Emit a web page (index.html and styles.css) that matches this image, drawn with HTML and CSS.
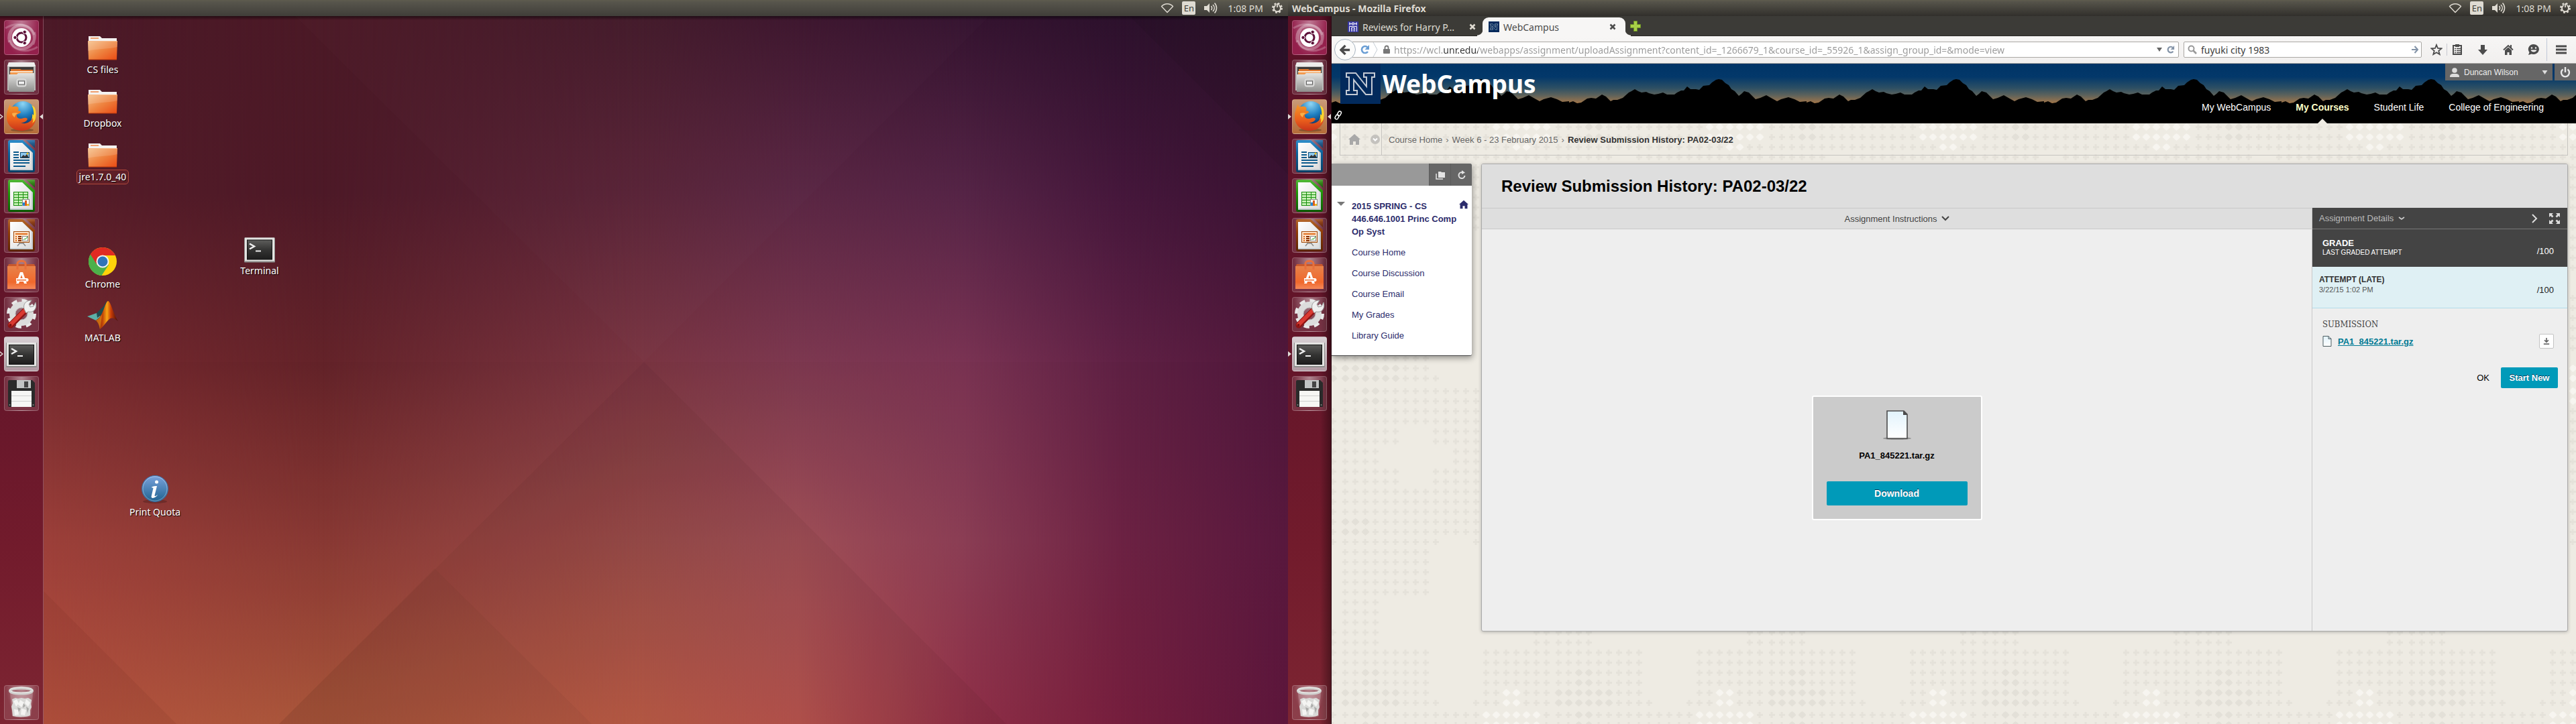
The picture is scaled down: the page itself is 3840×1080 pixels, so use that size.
FILE: index.html
```html
<!DOCTYPE html>
<html lang="en">
<head>
<meta charset="utf-8">
<title>WebCampus</title>
<link rel="stylesheet" href="styles.css">
</head>
<body>
<svg class="defs" aria-hidden="true">
  <defs>
    <linearGradient id="gSteel" x1="0" y1="0" x2="0" y2="1"><stop offset="0" stop-color="#e4e4e2"/><stop offset="1" stop-color="#8e8e8c"/></linearGradient>
    <linearGradient id="gFolder" x1="0" y1="0" x2="1" y2="1"><stop offset="0" stop-color="#f6c088"/><stop offset=".5" stop-color="#ee8440"/><stop offset="1" stop-color="#ea4a14"/></linearGradient>
    <linearGradient id="gScreen" x1="0" y1="0" x2="0" y2="1"><stop offset="0" stop-color="#5c5c5a"/><stop offset=".5" stop-color="#343433"/><stop offset="1" stop-color="#1e1e1e"/></linearGradient>
    <linearGradient id="gPage" x1="0" y1="0" x2="1" y2="1"><stop offset="0" stop-color="#ffffff"/><stop offset="1" stop-color="#dcdcdc"/></linearGradient>
    <linearGradient id="gBlue" x1="0" y1="0" x2="0" y2="1"><stop offset="0" stop-color="#2e8ecb"/><stop offset=".4" stop-color="#0c639c"/><stop offset="1" stop-color="#063f66"/></linearGradient>
    <linearGradient id="gGreen" x1="0" y1="0" x2="0" y2="1"><stop offset="0" stop-color="#52b838"/><stop offset=".4" stop-color="#1f9808"/><stop offset="1" stop-color="#0b5c02"/></linearGradient>
    <linearGradient id="gBrown" x1="0" y1="0" x2="0" y2="1"><stop offset="0" stop-color="#b5682c"/><stop offset=".4" stop-color="#8f3c08"/><stop offset="1" stop-color="#5c2402"/></linearGradient>
    <linearGradient id="gBag" x1="0" y1="0" x2="0" y2="1"><stop offset="0" stop-color="#e8824a"/><stop offset=".7" stop-color="#f0682c"/><stop offset="1" stop-color="#f5895a"/></linearGradient>
    <linearGradient id="gInfo" x1="0" y1="0" x2="0" y2="1"><stop offset="0" stop-color="#7aa2dc"/><stop offset="1" stop-color="#1f6390"/></linearGradient>
    <radialGradient id="gGlobe" cx=".5" cy=".1" r=".9"><stop offset="0" stop-color="#8fd6f4"/><stop offset=".5" stop-color="#1f7fc0"/><stop offset="1" stop-color="#0a2558"/></radialGradient>
    <linearGradient id="gFox" x1="0" y1="0" x2="0" y2="1"><stop offset="0" stop-color="#f59a28"/><stop offset=".6" stop-color="#ea5f1c"/><stop offset="1" stop-color="#c8341a"/></linearGradient>
    <linearGradient id="gFlame" x1="0" y1="0" x2="1" y2="0"><stop offset="0" stop-color="#7a2408"/><stop offset=".3" stop-color="#c04408"/><stop offset=".5" stop-color="#f8a414"/><stop offset=".68" stop-color="#c83c08"/><stop offset="1" stop-color="#3a0a04"/></linearGradient>
    <linearGradient id="gSheet" x1="0" y1="0" x2="0" y2="1"><stop offset="0" stop-color="#e2f3fc"/><stop offset="1" stop-color="#ffffff"/></linearGradient>
    <linearGradient id="gSky" x1="0" y1="0" x2="0" y2="1"><stop offset="0" stop-color="#003466"/><stop offset=".33" stop-color="#03386a"/><stop offset=".6" stop-color="#2c4f64"/><stop offset=".78" stop-color="#5c625c"/><stop offset="1" stop-color="#a87848"/></linearGradient>
  </defs>

  <symbol id="dash" viewBox="0 0 52 52">
    <path d="M8 33C4 15 18 4 32 9c12 4 16 17 11 27M45 18c4 14-8 28-24 24C9 39 6 24 13 13" fill="none" stroke="#fff" stroke-opacity=".3" stroke-width="4"/>
    <path d="M2 12C18 2 40 5 45 22M50 40C34 50 12 46 8 30" fill="none" stroke="#fff" stroke-opacity=".22" stroke-width="3"/>
    <circle cx="26" cy="26" r="14" fill="#fff"/>
    <circle cx="26" cy="26" r="7" fill="none" stroke="#5c1038" stroke-width="3"/>
    <g fill="#5c1038" stroke="#fff" stroke-width="1"><circle cx="16.500" cy="26" r="2.700"/><circle cx="30.700" cy="17.800" r="2.700"/><circle cx="30.700" cy="34.200" r="2.700"/></g>
  </symbol>
  <symbol id="files" viewBox="0 0 52 52">
    <path d="M7 4h38l2 5v37H5V9z" fill="#b9b9b7"/><path d="M7 4h38l2 6H5z" fill="#ededeb"/>
    <rect x="8" y="11" width="36" height="12" fill="#3c3a38"/>
    <path d="M10 14h14l2 1h17v10H10z" fill="#e0762c"/><path d="M9 17h34v2H9z" fill="#fbe3c8"/><path d="M9 19h34v6H9z" fill="#f29a4e"/>
    <path d="M7 22h12l2-2h24v28H7z" fill="url(#gSteel)"/>
    <rect x="19" y="29" width="14" height="11" rx="3" fill="#c9c9c7" stroke="#e6e6e6"/><rect x="21.500" y="32" width="9" height="5" fill="#f2f2f2" stroke="#5c5c5c"/>
  </symbol>
  <symbol id="firefox" viewBox="0 0 52 52">
    <ellipse cx="27" cy="46" rx="17" ry="2.500" fill="#000" opacity=".25"/>
    <circle cx="28" cy="22" r="19" fill="url(#gGlobe)"/>
    <path d="M46 13c2 5 3 16-2 23-3 4-7 6-12 6 8-5 11-14 10-20l2 2c1-6-1-12-3-15 2 1 4 2 5 4z" fill="#fbd52c"/>
    <path d="M5 18c1-5 3-8 4-11 0 3 1 4 2 5 4-2 8-1 10 0 1 3 1 4-1 5 4 0 5 1 5 3l-6 3c-1 3 2 6 5 6 4 0 7-3 11 0-1 4-5 6-10 6 6 3 14 0 18-7 1 4 0 6-1 8 4-3 6-7 6-11 0 13-9 22-22 22C13 47 4 38 4 27c0-4 0-7 1-9z" fill="url(#gFox)"/>
    <path d="M12 21c3-1 6-1 9 0-3 1-5 3-5 6-2-1-4-3-4-6z" fill="#f9b04a"/>
  </symbol>
  <symbol id="doc" viewBox="0 0 52 52">
    <path d="M9 2h19l18 16v29a3 3 0 0 1-3 3H9a3 3 0 0 1-3-3V5a3 3 0 0 1 3-3z"/>
    <path d="M33 2h13v12z" opacity=".8"/>
    <path d="M11 6h16l16 15v26H9V6z" fill="#c4ccd2"/><path d="M9 6h18l14 14v25H9z" fill="url(#gPage)"/>
  </symbol>
  <symbol id="writer" viewBox="0 0 52 52">
    <use href="#doc" fill="url(#gBlue)"/>
    <path d="M14 20h8M14 24h8M14 28h8M14 32h24M14 36h24M14 41h18" stroke="#0b5a8c" stroke-width="2"/>
    <rect x="24.500" y="20.500" width="13" height="8" fill="#8fcaf0" stroke="#0b4a74"/><path d="M25 28l4-4 2 2 3-3 3 5z" fill="#333"/><circle cx="35" cy="22" r="1.500" fill="#f2c020"/>
  </symbol>
  <symbol id="calc" viewBox="0 0 52 52">
    <use href="#doc" fill="url(#gGreen)"/>
    <rect x="14.500" y="20.500" width="21" height="20" fill="#c6f0b4" stroke="#1a9010"/><path d="M14 24.500h22M14 28.500h22M14 32.500h22M14 36.500h22M21.500 20v20M28.500 20v20" stroke="#1a9010" fill="none"/>
    <rect x="27.500" y="31.500" width="10" height="9" fill="#fff" stroke="#8a8a8a"/><path d="M28 36h3v5h-3z" fill="#2288d8"/><path d="M31 33h3v8h-3z" fill="#d86020"/><path d="M34 38h3v3h-3z" fill="#f0c020"/>
  </symbol>
  <symbol id="impress" viewBox="0 0 52 52">
    <use href="#doc" fill="url(#gBrown)"/>
    <rect x="14.500" y="20.500" width="23" height="16" fill="#fde2c8" stroke="#a04808"/><path d="M17 24h18" stroke="#e07020" stroke-width="2"/>
    <path d="M17 28h2M17 31h2M17 34h2" stroke="#e07020" stroke-width="2"/><path d="M21 28h5M21 31h5M21 34h5" stroke="#8a3000" stroke-width="2"/>
    <rect x="27.500" y="27.500" width="8" height="7" fill="#fff" stroke="#8a8a8a"/><path d="M29 33l2-2 1 1 3-4" stroke="#20a020" fill="none"/><path d="M24 37l-4 5M28 37l4 5M22 38h8" stroke="#8a8a8a" stroke-width="1.500"/>
  </symbol>
  <symbol id="software" viewBox="0 0 52 52">
    <path d="M7 10h38l2 4H5z" fill="#c8582c"/><path d="M5 13h42v34H5z" fill="url(#gBag)"/>
    <path d="M20 18V9c0-5 12-5 12 0v9" fill="none" stroke="#e8703c" stroke-width="3"/>
    <path d="M24 22h4l6 17h-4l-1-3h-6l-1 3h-4zm2 4l-2 6h4z" fill="#fff" fill-rule="evenodd"/><path d="M18 31h16a2 2 0 0 1 0 5H18z" fill="#fff"/><path d="M19 33h14v1.500H19z" fill="#ea6a30"/>
  </symbol>
  <symbol id="settings" viewBox="0 0 52 52">
    <circle cx="26" cy="25" r="19.500" fill="none" stroke="#e9e9e9" stroke-width="5" stroke-dasharray="8.200 7.100"/>
    <circle cx="26" cy="25" r="13.500" fill="none" stroke="#dcdcdc" stroke-width="9"/>
    <circle cx="26" cy="25" r="9" fill="none" stroke="#b2b2b2"/>
    <path d="M10 42L32 20" stroke="#8e1414" stroke-width="9" stroke-linecap="round"/><path d="M10 41L32 19" stroke="#d93a32" stroke-width="6" stroke-linecap="round"/><circle cx="9.500" cy="42" r="2" fill="#7c1010"/>
    <path d="M30 18c-2-8 3-13 11-13l-4 6 2 4 5-1 3-6c3 9-3 16-11 14l-3 2z" fill="#f0f0f0" stroke="#9c9c9c"/>
  </symbol>
  <symbol id="termapp" viewBox="0 0 52 52">
    <rect x="3" y="9" width="46" height="37" rx="1" fill="#8c8c8a"/><rect x="4" y="9" width="44" height="35" fill="#e4e4e2"/><rect x="7" y="12" width="38" height="30" fill="#111"/><rect x="8" y="13" width="36" height="28" fill="url(#gScreen)"/>
    <path d="M11 18l7 4-7 4" fill="none" stroke="#eee" stroke-width="2.500"/><path d="M20 29h8" stroke="#eee" stroke-width="2"/>
  </symbol>
  <symbol id="floppy" viewBox="0 0 52 52">
    <path d="M6 8a2 2 0 0 1 2-2h34l4 4v36H8a2 2 0 0 1-2-2z" fill="#2a2a2a"/><path d="M19 6h21v12H19z" fill="#c2c4c4"/><path d="M30 8h6v9h-6z" fill="#444"/><path d="M11 22h30v24H11z" fill="#f6f6f4"/><path d="M11 29.500h30M11 37.500h30" stroke="#cfcfcf"/><circle cx="8.500" cy="43" r="1" fill="#888"/><circle cx="43.500" cy="43" r="1" fill="#888"/>
  </symbol>
  <symbol id="trash" viewBox="0 0 52 52">
    <path d="M9 12l3 34c4 3 24 3 28 0l3-34z" fill="#fff" opacity=".22"/>
    <path d="M12 21l5-2 4 1 5-1 5 1 5-1 5 3-1 6 1 5-2 4v8c-4 3-20 3-26 1l-1-9-1-5 2-5z" fill="#d9d9d7"/>
    <path d="M14 24l5-3 3 6-4 5zM24 22l6 4-4 7-5-4zM33 21l6 5-3 6-5-5zM15 36l6 1 1 7-6 1zM26 35l7 2-2 8-6-1z" fill="#f4f4f2"/><path d="M20 33l5 2-3 5zM33 32l4 3-2 7zM29 27l3 4-4 3z" fill="#a9a9a7"/>
    <ellipse cx="25.500" cy="8.500" rx="16.500" ry="4" fill="none" stroke="#cfcfcd" stroke-width="4"/><ellipse cx="25.500" cy="7.500" rx="17" ry="4" fill="none" stroke="#f2f2f0"/>
  </symbol>

  <symbol id="folder" viewBox="0 0 48 40">
    <path d="M3 2h17l3 3h22v8H3z" fill="#f4f2f0"/><path d="M6 4h12v2H6z" fill="#f0a070"/>
    <path d="M2 9h44l-1 28H3z" fill="url(#gFolder)"/><path d="M2 9h44v9C30 22 16 20 2 24z" fill="#fff" opacity=".14"/><path d="M3 37h42" stroke="#b8380c"/><path d="M2 9.500h44" stroke="#f8b888"/>
  </symbol>
  <symbol id="chrome" viewBox="0 0 44 44">
    <circle cx="22" cy="22" r="21" fill="#fdd20a"/><path d="M22 22L3.800 11.500A21 21 0 0 0 20.500 43L31 27z" fill="#4cb04a"/><path d="M22 13h19A21 21 0 0 0 3.800 11.500L13 26z" fill="#e02a22"/>
    <circle cx="22" cy="22" r="9.500" fill="#f2f2f2"/><circle cx="22" cy="22" r="7.500" fill="#2f74b8"/>
  </symbol>
  <symbol id="matlab" viewBox="0 0 48 44">
    <path d="M1 24l14-5 6 5-7 6z" fill="#5cb0a8"/><path d="M15 19l7-7c4-2 6-9 9-11l-8 20-7 5z" fill="#1e4c50"/>
    <path d="M32 1c4 0 8 20 15 30-5-4-9-6-13-3-5 4-8 11-14 15-1-5-2-9-6-13 11-5 13-27 18-29z" fill="url(#gFlame)"/>
    <path d="M14 30c4-2 7-6 9-9l-1 9-2 13c-1-5-2-9-6-13z" fill="#e89018" opacity=".6"/>
  </symbol>
  <symbol id="info" viewBox="0 0 44 44">
    <ellipse cx="22" cy="40" rx="18" ry="3" fill="#000" opacity=".2"/><circle cx="22" cy="21" r="19.500" fill="url(#gInfo)" stroke="#3a6ea4"/><circle cx="22" cy="21" r="18" fill="none" stroke="#fff" stroke-opacity=".35"/>
    <circle cx="24.500" cy="11" r="2.500" fill="#fff"/><path d="M16.500 19c3-2 6-2 8.500-2l-3.500 14c0 2 2 1 4.500-1-2 4-9 7-9.500 3l3-13z" fill="#fff"/>
  </symbol>

  <symbol id="wifi" viewBox="0 0 20 16"><path d="M10 14.500L1.500 5.500C6 .5 14 .5 18.500 5.500z" fill="none" stroke="#dfdbd2" stroke-width="1.400" stroke-linejoin="round"/></symbol>
  <symbol id="volume" viewBox="0 0 20 18"><path d="M0 6h4l4-4v14l-4-4H0z" fill="#dfdbd2"/><path d="M10.500 6c1.500 2 1.500 4 0 6M13 4c3 3 3 7 0 10M15.500 1.500c4 4 4 11 0 15" fill="none" stroke="#dfdbd2" stroke-width="1.600"/></symbol>
  <symbol id="session" viewBox="0 0 16 16"><circle cx="8" cy="8" r="6.500" fill="none" stroke="#dfdbd2" stroke-width="3" stroke-dasharray="2.600 2.500"/><path d="M5.500 4a5 5 0 1 0 5 0" fill="none" stroke="#dfdbd2" stroke-width="2"/><path d="M8 1v6" stroke="#dfdbd2" stroke-width="1.800"/></symbol>
  <symbol id="close" viewBox="0 0 10 10"><path d="M1.500 1.500l7 7M8.500 1.500l-7 7" stroke="currentColor" stroke-width="2.600"/></symbol>
  <symbol id="blockN" viewBox="0 0 60 60"><rect width="60" height="60" fill="#022a5c"/><path d="M9 14h14l16 20V20h-4v-6h16v6h-4v26h-9L20 24v16h5v6H9v-6h4V20H9z" fill="#022a5c" stroke="#c4cad4" stroke-width="2"/></symbol>
  <symbol id="house" viewBox="0 0 18 16"><path d="M9 0l9 8h-2v8h-5v-5H7v5H2V8H0z" fill="currentColor"/></symbol>
  <symbol id="reload" viewBox="0 0 14 16"><path d="M10.500 4.500A5 5 0 1 0 11 11" fill="none" stroke="currentColor" stroke-width="2.600"/><path d="M13 1v7H6.500z" fill="currentColor"/></symbol>
</svg>

<div class="screens">
  <section class="screen" aria-label="Left display">
    <header class="panel">
      <div class="indicators">
        <svg class="i-wifi"><use href="#wifi"/></svg><span class="lang">En</span><svg class="i-vol"><use href="#volume"/></svg><time>1:08 PM</time><svg class="i-ses"><use href="#session"/></svg>
      </div>
    </header>
    <div class="work wallpaper">
      <div class="mesh m1"></div><div class="mesh m2"></div><div class="mesh m3"></div><div class="mesh m4"></div><div class="mesh m5"></div><div class="mesh m6"></div><div class="mesh m7"></div>
      <svg class="folds" viewBox="0 24 1920 1056" preserveAspectRatio="none" aria-hidden="true">
        <path d="M440 24L960 540 1475 24z" fill="#fff" opacity=".012"/><path d="M960 540L416 1080H1500z" fill="#301010" opacity=".06"/><path d="M648 848L416 1080h466z" fill="#40200c" opacity=".05"/><path d="M0 817V1080H263z" fill="#401010" opacity=".07"/><path d="M1684 24H1920V260z" fill="#000" opacity=".05"/><path d="M0 540h1920v540H0z" fill="#000" opacity=".015"/>
      </svg>
      <nav class="launcher" aria-label="Launcher">
        <button class="tile t-dash" aria-label="Search"><svg><use href="#dash"/></svg></button>
        <button class="tile" aria-label="Files"><svg><use href="#files"/></svg></button>
        <button class="tile t-fox open" aria-label="Firefox"><svg><use href="#firefox"/></svg><i class="focus"></i></button>
        <button class="tile" aria-label="Writer"><svg><use href="#writer"/></svg></button>
        <button class="tile" aria-label="Calc"><svg><use href="#calc"/></svg></button>
        <button class="tile" aria-label="Impress"><svg><use href="#impress"/></svg></button>
        <button class="tile" aria-label="Software Center"><svg><use href="#software"/></svg></button>
        <button class="tile" aria-label="System Settings"><svg><use href="#settings"/></svg></button>
        <button class="tile t-term open" aria-label="Terminal"><svg><use href="#termapp"/></svg></button>
        <button class="tile" aria-label="Floppy Disk"><svg><use href="#floppy"/></svg></button>
        <button class="tile last" aria-label="Trash"><svg><use href="#trash"/></svg></button>
      </nav>
      <main class="desktop">
        <a href="#" class="shortcut d-cs"><svg class="s-folder"><use href="#folder"/></svg><span>CS files</span></a>
        <a href="#" class="shortcut d-drop"><svg class="s-folder"><use href="#folder"/></svg><span>Dropbox</span></a>
        <a href="#" class="shortcut d-jre picked"><svg class="s-folder"><use href="#folder"/></svg><span>jre1.7.0_40</span></a>
        <a href="#" class="shortcut d-chrome"><svg class="s-round"><use href="#chrome"/></svg><span>Chrome</span></a>
        <a href="#" class="shortcut d-matlab"><svg class="s-wide"><use href="#matlab"/></svg><span>MATLAB</span></a>
        <a href="#" class="shortcut d-term"><svg class="s-term" viewBox="3 9 46 37"><use href="#termapp" width="52" height="52"/></svg><span>Terminal</span></a>
        <a href="#" class="shortcut d-info"><svg class="s-round"><use href="#info"/></svg><span>Print Quota</span></a>
      </main>
    </div>
  </section>

  <section class="screen" aria-label="Right display">
    <header class="panel dark">
      <strong>WebCampus - Mozilla Firefox</strong>
      <div class="indicators">
        <svg class="i-wifi"><use href="#wifi"/></svg><span class="lang">En</span><svg class="i-vol"><use href="#volume"/></svg><time>1:08 PM</time><svg class="i-ses"><use href="#session"/></svg>
      </div>
    </header>
    <div class="work">
      <nav class="launcher shaded" aria-label="Launcher">
        <button class="tile t-dash" aria-label="Search"><svg><use href="#dash"/></svg></button>
        <button class="tile" aria-label="Files"><svg><use href="#files"/></svg></button>
        <button class="tile t-fox open" aria-label="Firefox"><svg><use href="#firefox"/></svg><i class="focus"></i></button>
        <button class="tile" aria-label="Writer"><svg><use href="#writer"/></svg></button>
        <button class="tile" aria-label="Calc"><svg><use href="#calc"/></svg></button>
        <button class="tile" aria-label="Impress"><svg><use href="#impress"/></svg></button>
        <button class="tile" aria-label="Software Center"><svg><use href="#software"/></svg></button>
        <button class="tile" aria-label="System Settings"><svg><use href="#settings"/></svg></button>
        <button class="tile t-term open" aria-label="Terminal"><svg><use href="#termapp"/></svg></button>
        <button class="tile" aria-label="Floppy Disk"><svg><use href="#floppy"/></svg></button>
        <button class="tile last" aria-label="Trash"><svg><use href="#trash"/></svg></button>
      </nav>

      <div class="browser">
        <div class="tabs">
          <div class="tab">
            <svg class="fav" viewBox="0 0 16 16"><path d="M0 0h16v16H0z" fill="#3434a0"/><path d="M3 1v5M7 1v5M9 1v5M13 1v5M2 3.500h5M9 3.500h5M2.500 15V7.500h11V15M5.500 15V9.500h5V15M8 11v4" fill="none" stroke="#fff"/></svg>
            <span>Reviews for Harry P…</span><button class="x" aria-label="Close tab"><svg><use href="#close"/></svg></button>
          </div>
          <div class="tab active">
            <svg class="fav"><use href="#blockN"/></svg>
            <span>WebCampus</span><button class="x" aria-label="Close tab"><svg><use href="#close"/></svg></button>
          </div>
          <button class="newtab" aria-label="New tab"><svg viewBox="0 0 16 16"><path d="M5.500.5h5v5h5v5h-5v5h-5v-5h-5v-5h5z" fill="#a8d048" stroke="#6e9424"/></svg></button>
        </div>
        <div class="toolbar">
          <button class="back" aria-label="Back"><svg viewBox="0 0 18 18"><path d="M9 2L2 9l7 7M2.500 9H16" fill="none" stroke="#4a4a4a" stroke-width="3.600"/></svg></button>
          <div class="field url">
            <svg class="r-blue" viewBox="0 0 14 16"><use href="#reload"/></svg>
            <svg class="chev" viewBox="0 0 8 22"><path d="M1 0l6 11-6 11" fill="none" stroke="#c4ccd4"/></svg>
            <svg class="lock" viewBox="0 0 10 14"><path d="M2.500 7V4a2.500 2.500 0 0 1 5 0v3" fill="none" stroke="#777" stroke-width="1.800"/><rect y="6" width="10" height="7" rx="1" fill="#777"/></svg>
            <input type="text" aria-label="Address" value="https://wcl.unr.edu/webapps/assignment/uploadAssignment?content_id=_1266679_1&amp;course_id=_55926_1&amp;assign_group_id=&amp;mode=view">
            <svg class="caret" viewBox="0 0 8 6"><path d="M0 0h8L4 6z" fill="#666"/></svg>
            <svg class="r-grey" viewBox="0 0 14 16"><use href="#reload"/></svg>
          </div>
          <div class="field search">
            <svg class="mag" viewBox="0 0 14 14"><circle cx="5.500" cy="5.500" r="4" fill="none" stroke="#999" stroke-width="2"/><path d="M8.500 8.500L13 13" stroke="#999" stroke-width="2.600"/></svg>
            <input type="text" aria-label="Search" value="fuyuki city 1983">
            <svg class="go" viewBox="0 0 10 12"><path d="M0 6h9M4.500 1L9 6l-4.500 5" fill="none" stroke="#8494a8" stroke-width="2"/></svg>
          </div>
          <div class="tools">
            <button class="star" aria-label="Bookmark"><svg viewBox="0 0 18 18"><path d="M9 2l2 5 5.500.4-4.200 3.500L13.700 16 9 13.200 4.300 16l1.400-5.100L1.500 7.400 7 7z" fill="none" stroke="#4c4c4c" stroke-width="1.800"/></svg></button>
            <button aria-label="Bookmarks list"><svg viewBox="0 0 18 18"><path d="M3 3h12v13H3z" fill="none" stroke="#4c4c4c" stroke-width="2"/><path d="M6 1h6v4H6z" fill="#4c4c4c"/><path d="M5 7.500h2M8 7.500h6M5 10.500h2M8 10.500h6M5 13.500h2M8 13.500h6" stroke="#4c4c4c" stroke-width="1.400"/></svg></button>
            <button aria-label="Downloads"><svg viewBox="0 0 18 18"><path d="M6 2h6v7h4l-7 8-7-8h4z" fill="#4c4c4c"/></svg></button>
            <button aria-label="Home"><svg viewBox="0 0 18 18"><path d="M2 9.500L9 3l7 6.500" fill="none" stroke="#4c4c4c" stroke-width="2"/><path d="M4 10l5-4.500L14 10v7h-3.500v-4h-3v4H4zM12 2h2v5h-2z" fill="#4c4c4c"/></svg></button>
            <button aria-label="Chat"><svg viewBox="0 0 18 18"><path d="M9 1a8 7.500 0 1 1-3 14.500L1 17l1.500-4A8 7.500 0 0 1 9 1z" fill="#4c4c4c"/><circle cx="6" cy="6.500" r="1.200" fill="#f4f3f2"/><circle cx="12" cy="6.500" r="1.200" fill="#f4f3f2"/><path d="M4.500 9.500h9c-1 4-8 4-9 0z" fill="#f4f3f2"/></svg></button>
            <button class="menu" aria-label="Menu"><svg viewBox="0 0 18 18"><path d="M1 4h16M1 9h16M1 14h16" stroke="#4c4c4c" stroke-width="2.800"/></svg></button>
          </div>
        </div>

        <div class="page">
          <header class="banner">
            <svg class="hills" aria-hidden="true">
              <defs><pattern id="ridge" width="354" height="89" patternUnits="userSpaceOnUse"><path fill="url(#gSky)" d="M0 0h354v60H0z"/><path d="M0 58l6-2 6 3 6-1 9-6 6-1 7 1 9-6 6 3 7 7 4-2h6l8-3 9-8 4-2 5-3 5 3 5 2 7-1 4 2 8 2 6-1 7-2 6 3h11l4-3 6-3h4l5-6 5 4h8l5 1 6-6 9-1 4-4 6-4 4-1 5 1 5 5 5 3 4 6 5 3 6 7 4-3 4-4 7 2 10 10 7-2 9-4 7 4 9 5 6-3 11-3 9 3 8 4 10-1v31H0z"/></pattern></defs>
              <rect width="100%" height="89" fill="url(#ridge)"/>
            </svg>
            <div class="brand">
              <a href="#" class="logo"><svg class="mark"><use href="#blockN"/></svg><span>WebCampus</span></a>
              <svg class="link" viewBox="0 0 12 14"><g fill="none" stroke="#fff" stroke-width="1.500"><rect x="5.500" y="1" width="4.500" height="7" rx="2.200" transform="rotate(28 8 4)"/><rect x="2" y="6" width="4.500" height="7" rx="2.200" transform="rotate(28 4 9)"/></g></svg>
            </div>
            <div class="banner-side">
              <div class="account">
                <button class="user"><svg viewBox="0 0 14 14"><circle cx="7" cy="4" r="3.800" fill="#ddd"/><path d="M0 14c0-5 3-5 7-5s7 0 7 5z" fill="#ddd"/></svg><span>Duncan Wilson</span><svg class="down" viewBox="0 0 8 6"><path d="M0 0h8L4 6z" fill="#ddd"/></svg></button>
                <button class="power" aria-label="Log out"><svg viewBox="0 0 16 16"><path d="M4.500 3.500a6 6 0 1 0 7 0" fill="none" stroke="#e8e8e8" stroke-width="2.400"/><path d="M8 0v8" stroke="#e8e8e8" stroke-width="2.400"/></svg></button>
              </div>
              <nav class="topnav" aria-label="Areas"><a href="#">My WebCampus</a><a href="#" class="here">My Courses</a><a href="#">Student Life</a><a href="#">College of Engineering</a></nav>
            </div>
          </header>

          <div class="canvas">
            <svg class="texture" aria-hidden="true">
              <defs>
                <pattern id="plus" width="15" height="15" patternUnits="userSpaceOnUse"><path d="M7 3v9M3 7.500h9" stroke="#e5e2da" stroke-width="3"/></pattern>
                <pattern id="bead" width="15" height="15" patternUnits="userSpaceOnUse"><path d="M7.500 2l3 2 3 3.500-3 3-3 2.500-3-2.500-3-3 3-3.500z" fill="#e3e0d8"/></pattern>
                <pattern id="pearl" width="15" height="15" patternUnits="userSpaceOnUse"><path d="M7.500 2l3 2 3 3.500-3 3-3 2.500-3-2.500-3-3 3-3.500z" fill="#f7f5f0"/></pattern>
                <pattern id="weave" x="13" width="318" height="966" patternUnits="userSpaceOnUse">
                  <g transform="translate(0 -2)">
                    <path fill="url(#plus)" d="M0 0h45v30H0zM75 0h150v30H75zM0 30h255v15H0zM285 30h30v15h-30zM0 45h90v60H0zM120 45h195v60H120zM0 105h315v60H0zM0 165h135v60H0zM240 165h60v60h-60zM0 225h60v60H0zM0 285h135v75H0zM240 255h60v90h-60zM90 360h45v15H90zM90 375h60v15H90z"/>
                    <path fill="url(#bead)" d="M45 0h30v30H45zM0 360h90v30H0zM285 360h30v30h-30z"/>
                    <path fill="url(#pearl)" d="M225 0h90v30h-90zM255 30h30v15h-30zM240 360h30v30h-30z"/>
                  </g>
                  <g transform="translate(0 392)">
                    <path fill="url(#plus)" d="M0 0h30v30H0zM60 0h150v30H60zM0 30h315v30H0zM0 60h90v30H0zM135 60h180v30H135zM0 90h60v30H0zM165 90h150v30H165zM0 120h90v30H0zM135 120h180v30H135zM0 150h315v45H0zM45 195h270v30H45zM0 225h150v15H0zM195 225h120v15H195zM0 240h135v75H0zM0 315h60v75H0zM285 360h30v30h-30zM0 390h135v30H0zM210 390h105v30H210zM0 420h30v30H0zM60 420h75v30H60zM210 420h105v30H210zM90 450h45v15H90zM210 450h30v15h-30zM270 450h45v15h-45zM90 465h60v15H90zM195 465h45v15h-45zM270 465h45v15h-45z"/>
                    <path fill="url(#bead)" d="M30 0h30v30H30zM0 195h45v30H0zM30 420h30v30H30zM0 450h90v30H0z"/>
                    <path fill="url(#pearl)" d="M210 0h90v30h-90zM240 450h30v30h-30z"/>
                  </g>
                  <g transform="translate(0 875)">
                    <path fill="url(#plus)" d="M0 0h30v30H0zM60 0h150v30H60zM300 0h15v30h-15z"/><path fill="url(#bead)" d="M30 0h30v30H30z"/><path fill="url(#pearl)" d="M210 0h90v30h-90z"/>
                  </g>
                </pattern>
              </defs>
              <rect width="100%" height="100%" fill="url(#weave)"/>
            </svg>

            <nav class="crumbs" aria-label="Breadcrumb">
              <div class="crumb-tools"><a href="#" aria-label="Home"><svg class="home"><use href="#house"/></svg></a><button aria-label="More"><svg viewBox="0 0 14 14"><circle cx="7" cy="7" r="7" fill="#c4c2be"/><path d="M4 5.500l3 3 3-3" fill="none" stroke="#fff" stroke-width="2"/></svg></button></div>
              <ol><li><a href="#">Course Home</a></li><li><a href="#">Week 6 - 23 February 2015</a></li><li aria-current="page">Review Submission History: PA02-03/22</li></ol>
            </nav>

            <div class="columns">
              <aside class="sidebar">
                <div class="side-bar">
                  <button aria-label="Folder view"><svg viewBox="0 0 14 14"><path d="M4 2h4l1 1h5v8H4z" fill="#e4e4e4"/><path d="M1 5v8h10" fill="none" stroke="#e4e4e4" stroke-width="1.500"/></svg></button>
                  <button aria-label="Refresh"><svg viewBox="0 0 14 14"><path d="M7 3a4.500 4.500 0 1 0 4.500 5" fill="none" stroke="#e4e4e4" stroke-width="2"/><path d="M7 0l5 3.500L7 6z" fill="#e4e4e4"/></svg></button>
                </div>
                <div class="course"><svg class="tri" viewBox="0 0 12 6"><path d="M0 0h12L6 6z" fill="#777"/></svg><h2><a href="#">2015 SPRING - CS 446.646.1001 Princ Comp Op Syst</a></h2><svg class="home"><use href="#house"/></svg></div>
                <ul><li><a href="#">Course Home</a></li><li><a href="#">Course Discussion</a></li><li><a href="#">Course Email</a></li><li><a href="#">My Grades</a></li><li><a href="#">Library Guide</a></li></ul>
              </aside>

              <main class="review">
                <h1>Review Submission History: PA02-03/22</h1>
                <div class="split">
                  <section class="viewer">
                    <button class="instructions">Assignment Instructions <svg viewBox="0 0 12 8"><path d="M1 1l5 5 5-5" fill="none" stroke="#444" stroke-width="2"/></svg></button>
                    <div class="stage">
                      <div class="card">
                        <svg viewBox="0 0 44 44"><ellipse cx="22" cy="42" rx="21" ry="2" fill="#000" opacity=".28"/><path d="M7 1h25l5 5v36H7z" fill="url(#gSheet)" stroke="#4c4c4c" stroke-width="1.600"/><path d="M31 1h1l5 5v1h-6z" fill="#4c4c4c"/></svg>
                        <strong>PA1_845221.tar.gz</strong>
                        <button class="primary">Download</button>
                      </div>
                    </div>
                  </section>
                  <aside class="details">
                    <div class="bar"><button class="toggle">Assignment Details <svg viewBox="0 0 10 6"><path d="M1 1l4 3 4-3" fill="none" stroke="#ccc" stroke-width="1.600"/></svg></button>
                      <div class="bar-icons"><button aria-label="Collapse"><svg viewBox="0 0 16 16"><path d="M4 2l6 6-6 6" fill="none" stroke="#ddd" stroke-width="2"/></svg></button><button aria-label="Full screen"><svg viewBox="0 0 16 16"><path d="M0 0h6L4 2l2.500 2.500-2 2L2 4 0 6zM16 0v6l-2-2-2.500 2.500-2-2L12 2l-2-2zM0 16v-6l2 2 2.500-2.500 2 2L4 14l2 2zM16 16h-6l2-2-2.500-2.500 2-2L14 12l2-2z" fill="#ddd"/></svg></button></div></div>
                    <div class="grade"><div><h3>GRADE</h3><p>LAST GRADED ATTEMPT</p></div><span>/100</span></div>
                    <div class="attempt"><div><h3>ATTEMPT (LATE)</h3><p>3/22/15 1:02 PM</p></div><span>/100</span></div>
                    <div class="submission">
                      <h4>SUBMISSION</h4>
                      <div class="file"><svg viewBox="0 0 14 16"><path d="M1 .5h8l4 4v11H1z" fill="url(#gSheet)" stroke="#4c5c60"/><path d="M9 .5v4h4" fill="none" stroke="#4c5c60"/></svg><a href="#">PA1_845221.tar.gz</a><button aria-label="Download file"><svg viewBox="0 0 12 12"><path d="M6 0v7M2.500 4L6 7.500 9.500 4" fill="none" stroke="#666" stroke-width="2"/><path d="M1 11h10" stroke="#666" stroke-width="2"/></svg></button></div>
                    </div>
                    <div class="actions"><button class="plain">OK</button><button class="primary">Start New</button></div>
                  </aside>
                </div>
              </main>
            </div>
          </div>
        </div>
      </div>
    </div>
  </section>
</div>
</body>
</html>
```
FILE: styles.css
```css
* { box-sizing: border-box; }
body { margin: 0; font-family: "Liberation Sans", Arial, sans-serif; font-size: 13px; background: #2a1128; }
button { margin: 0; padding: 0; border: 0; background: none; font: inherit; color: inherit; cursor: pointer; }
a { color: inherit; text-decoration: none; }
h1, h2, h3, h4, p, ul, ol { margin: 0; padding: 0; }
ul, ol { list-style: none; }
svg { display: block; flex: none; }
.defs { position: absolute; width: 0; height: 0; }

.screens { display: grid; grid-template-columns: 1fr 1fr; min-height: 100vh; }
.screen { display: flex; flex-direction: column; min-width: 0; font-family: "Noto Sans", "Open Sans", sans-serif; }

/* Top panel */
.panel { display: flex; align-items: center; height: 24px; padding: 0 8px 0 6px; background: linear-gradient(#5f5c4e, #57554c 3px, #403e39); color: #dfdbd2; font-size: 14px; z-index: 2; }
.panel.dark { background: linear-gradient(#5f5c4e, #55534a 3px, #312f2b); }
.panel strong { font-weight: 700; }
.indicators { display: flex; align-items: center; margin-left: auto; }
.i-wifi { width: 20px; height: 16px; margin-right: 12px; }
.i-vol { width: 20px; height: 18px; margin: 0 15px 0 13px; }
.i-ses { width: 16px; height: 16px; margin-left: 13px; }
.lang { width: 20px; height: 20px; line-height: 20px; border-radius: 2px; background: #dfdbd2; color: #3c3b37; font-size: 13px; text-align: center; }

.work { position: relative; display: flex; flex: 1; min-width: 0; }

/* Wallpaper: vertical gradients blended from left to right */
.wallpaper { isolation: isolate; overflow: hidden; }
.wallpaper::before { content: ""; position: absolute; inset: 0 0 auto; height: 6px; background: linear-gradient(rgba(0,0,0,.5), transparent); z-index: 1; }
.mesh, .folds { position: absolute; inset: 0; width: 100%; height: 100%; z-index: -1; }
.m1 { background: linear-gradient(#4b1927, #551c28 25%, #782a2f 49%, #9e403a 74%, #b7543f); }
.m2 { background: linear-gradient(#4b1926, #4d1927 25%, #642329 49%, #8b3934 74%, #ac583b); mask-image: linear-gradient(90deg, transparent 4%, #000 25%); }
.m3 { background: linear-gradient(#421a2a, #592337 25%, #7a3542 49%, #9c4e4c 74%, #be5e49); mask-image: linear-gradient(90deg, transparent 25%, #000 50%); }
.m4 { background: linear-gradient(#3c152d, #5a2643 25%, #7d3850 49%, #a15058 74%, #ba5650); mask-image: linear-gradient(90deg, transparent 50%, #000 62%); }
.m5 { background: linear-gradient(#34132f, #552446 25%, #7a3353 49%, #8d3e56 74%, #923049); mask-image: linear-gradient(90deg, transparent 62%, #000 75%); }
.m6 { background: linear-gradient(#2c112c, #45173b 25%, #602145 49%, #6e2345 74%, #771f3e); mask-image: linear-gradient(90deg, transparent 75%, #000 87%); }
.m7 { background: linear-gradient(#2a1128, #3a1232 25%, #50173a 49%, #5a193e 74%, #5e173c); mask-image: linear-gradient(90deg, transparent 87%, #000 100%); }

/* Launcher */
.launcher { display: flex; flex-direction: column; gap: 7px; flex: none; width: 65px; padding: 6px; background: linear-gradient(#5a1126, #65162a 50%, #721b2c 75%, #7d2532); border-right: 1px solid rgba(255,255,255,.25); }
.launcher.shaded { background: linear-gradient(90deg, transparent 75%, rgba(0,0,0,.35)), linear-gradient(#5a1126, #65162a 50%, #721b2c 75%, #7d2532); border-right-color: #2c0a14; }
.tile { position: relative; width: 52px; height: 52px; border-radius: 4px; border: 1px solid rgba(255,255,255,.2); background: radial-gradient(ellipse at 50% 0, rgba(255,255,255,.42), transparent 65%), rgba(255,255,255,.12); }
.tile svg { width: 52px; height: 52px; margin: -1px; }
.t-dash { background: radial-gradient(ellipse at 50% 0, rgba(255,255,255,.4), transparent 75%), #94204c; }
.t-fox { background: linear-gradient(#c89a78, #b56c38); }
.t-term { background: linear-gradient(#d8d0d4, #b09aa2); }
.last { margin-top: auto; }
.open::before { content: ""; position: absolute; left: -7px; top: 21px; border: 4px solid transparent; border-left: 5px solid #e0dcd8; border-right: 0; }
.wallpaper .open::after { content: ""; position: absolute; left: -7px; top: 23px; border: 2px solid transparent; border-left: 3px solid #65162a; border-right: 0; }
.focus { position: absolute; right: -7px; top: 21px; border: 4px solid transparent; border-right: 5px solid #e0dcd8; border-left: 0; }

/* Desktop shortcuts */
.desktop { position: relative; flex: 1; }
.shortcut { position: absolute; width: 120px; display: flex; flex-direction: column; align-items: center; justify-content: flex-end; height: 70px; color: #fff; font-size: 14px; line-height: 20px; text-shadow: 1px 1px 1px #000; }
.shortcut span { padding: 0 4px; border-radius: 4px; }
.shortcut svg { margin-bottom: 2px; }
.picked span { padding: 0 3px; outline: 1px solid #b0483a; background: rgba(120,40,40,.35); }
.s-folder { width: 48px; height: 40px; }
.s-round { width: 44px; height: 44px; }
.s-wide { width: 48px; height: 44px; }
.shortcut .s-term { width: 46px; height: 38px; }
.d-cs { left: 28px; top: 20px; }
.d-drop { left: 28px; top: 100px; }
.d-jre { left: 28px; top: 180px; }
.d-chrome { left: 28px; top: 340px; }
.d-matlab { left: 28px; top: 420px; }
.d-term { left: 262px; top: 320px; }
.d-info { left: 106px; top: 680px; }

/* Browser chrome */
.browser { flex: 1; display: flex; flex-direction: column; min-width: 0; background: #eeebe3; }
.tabs { display: flex; align-items: flex-end; height: 30px; background: #3c3b37; border-bottom: 1px solid #2a2926; }
.tab { display: flex; align-items: center; gap: 6px; height: 28px; width: 218px; margin-bottom: -1px; padding: 0 3px 0 24px; font-size: 14px; color: #dfdbd2; }
.fav { width: 16px; height: 16px; }
.x { margin-left: auto; }
.x svg { width: 10px; height: 10px; }
.tab.active { position: relative; width: 213px; margin: 0 7px -1px; padding: 0 14px 0 9px; border-radius: 9px 9px 0 0; background: #f7f6f5; color: #4c4c4c; }
.tab.active::before, .tab.active::after { content: ""; position: absolute; bottom: 0; width: 8px; height: 10px; }
.tab.active::before { left: -8px; background: radial-gradient(circle at 0 0, transparent 8px, #f7f6f5 9px); }
.tab.active::after { right: -8px; background: radial-gradient(circle at 100% 0, transparent 8px, #f7f6f5 9px); }
.newtab { align-self: center; margin-top: 1px; }
.newtab svg { width: 16px; height: 16px; }

.toolbar { display: flex; align-items: center; height: 41px; padding: 0 13px 0 4px; background: linear-gradient(#f7f6f5, #f1efee); border-bottom: 1px solid #a8a6a2; }
.back { position: relative; display: grid; place-items: center; width: 32px; height: 32px; border: 1px solid #a8b4c0; border-radius: 16px; background: #fbfbfa; z-index: 1; }
.back svg { width: 17px; height: 17px; }
.field { display: flex; align-items: center; height: 24px; border: 1px solid #aaa8a4; border-radius: 2px; background: #fff; }
.field input { flex: 1; min-width: 0; height: 20px; padding: 0; border: 0; outline: 0; background: none; font: 14px "Noto Sans", "Open Sans", sans-serif; color: #3c3c3c; }
.url { flex: 1; margin-left: -6px; padding: 0 5px 0 12px; }
.field.url input { color: transparent; background: linear-gradient(90deg, #999 73px, #333 73px 125px, #999 125px); background-clip: text; -webkit-background-clip: text; }
.r-blue { width: 14px; height: 16px; color: #6a9ed4; }
.chev { width: 8px; height: 22px; margin: 0 8px 0 4px; }
.lock { width: 10px; height: 14px; margin-right: 6px; }
.caret { width: 8px; height: 6px; margin-right: 7px; }
.r-grey { width: 12px; height: 14px; color: #8494a8; }
.search { width: 355px; margin-left: 7px; padding: 0 4px 0 5px; }
.mag { width: 14px; height: 14px; margin-right: 6px; }
.go { width: 10px; height: 12px; }
.tools { display: flex; align-items: center; gap: 20px; margin-left: 12px; }
.tools svg { width: 18px; height: 18px; }
.tools .star { margin-right: -14px; padding: 0 6px 0 1px; border-right: 1px solid #c8c8d0; }
.tools .menu { margin-left: -10px; padding: 8px 0 8px 12px; border-left: 1px solid #c0c8d8; }
.page { flex: 1; display: flex; flex-direction: column; font-family: "Liberation Sans", Arial, sans-serif; }

/* Banner */
.banner { position: relative; isolation: isolate; display: flex; justify-content: space-between; height: 89px; background: #000; color: #fff; }
.hills { position: absolute; inset: 0; width: 100%; height: 89px; z-index: -1; }
.logo { display: flex; align-items: center; gap: 3px; padding-left: 13px; font: 700 37px/60px "Noto Sans", "Open Sans", sans-serif; }
.mark { width: 60px; height: 60px; }
.link { width: 12px; height: 14px; margin: 10px 0 0 4px; }
.banner-side { display: flex; flex-direction: column; justify-content: space-between; align-items: flex-end; }
.account { display: flex; gap: 3px; }
.user { display: flex; align-items: center; gap: 7px; width: 160px; height: 25px; padding: 0 7px; background: #666; color: #eee; font-size: 12px; }
.user svg { width: 14px; height: 14px; }
.user .down { width: 9px; height: 6px; margin-left: auto; }
.power { display: grid; place-items: center; width: 32px; height: 25px; background: #666; }
.power svg { width: 16px; height: 16px; }
.topnav { display: flex; gap: 37px; padding-right: 48px; font-size: 14px; }
.topnav a { position: relative; line-height: 18px; padding-bottom: 15px; }
.here { color: #ffffc8; font-weight: 700; }
.here::after { content: ""; position: absolute; left: 50%; bottom: 0; margin-left: -7px; border: 7px solid transparent; border-bottom-color: #eeebe3; border-top: 0; }

/* Course area */
.canvas { position: relative; isolation: isolate; flex: 1; display: flex; flex-direction: column; background: #eeebe3; }
.texture { position: absolute; inset: 0; width: 100%; height: 100%; z-index: -1; }
.crumbs { display: flex; height: 48px; margin: 0 12px; border: 1px solid #c6c4c0; border-top: 0; color: #666; }
.crumb-tools { display: flex; align-items: center; gap: 15px; width: 62px; padding-left: 12px; border-right: 1px solid #c6c4c0; }
.crumb-tools .home { width: 18px; height: 16px; color: #a8a8a8; }
.crumb-tools button svg { width: 14px; height: 14px; }
.crumbs ol { display: flex; align-items: center; padding: 2px 0 0 10px; }
.crumbs li + li::before { content: "›"; padding: 0 5px; font-weight: 400; color: #777; }
.crumbs [aria-current] { font-weight: 700; color: #333; }

.columns { display: flex; flex: 1; align-items: flex-start; gap: 14px; margin: 12px 12px 138px 0; }
.sidebar { width: 209px; padding-bottom: 14px; background: #fff; border-radius: 0 3px 3px 0; border-bottom: 1px solid #444; box-shadow: 1px 3px 10px rgba(0,0,0,.4); color: #2c2c6c; }
.side-bar { display: flex; justify-content: flex-end; background: #999; border-radius: 0 3px 0 0; overflow: hidden; }
.side-bar button { display: grid; place-items: center; width: 32px; height: 33px; background: #666; border-left: 1px solid #5c5c5c; }
.side-bar svg { width: 14px; height: 14px; }
.course { display: flex; align-items: flex-start; padding: 21px 5px 0 8px; }
.course .tri { width: 12px; height: 6px; margin: 3px 10px 0 0; }
.course h2 { flex: 1; font-size: 13px; line-height: 19px; }
.course .home { width: 14px; height: 14px; }
.sidebar ul { padding: 6px 0 0 30px; }
.sidebar li { padding: 6px 0; line-height: 19px; }

.review { flex: 1; align-self: stretch; display: flex; flex-direction: column; border: 1px solid #aaa; border-radius: 3px; background: #eee; box-shadow: 0 1px 5px rgba(0,0,0,.25); overflow: hidden; }
h1 { padding: 0 29px; background: #dedede; border-bottom: 1px solid #c8c8c8; font-size: 24px; line-height: 65px; color: #000; }
.split { flex: 1; display: grid; grid-template-columns: 1fr 380px; }
.viewer { display: flex; flex-direction: column; border-right: 1px solid #c8c8c8; }
.instructions { display: flex; align-items: center; justify-content: center; gap: 6px; height: 31px; background: #dedede; border-bottom: 1px solid #c8c8c8; color: #444; }
.instructions svg { width: 12px; height: 8px; }
.stage { display: flex; justify-content: center; padding-top: 248px; }
.card { display: flex; flex-direction: column; align-items: center; width: 254px; padding: 20px; border: 2px solid #fff; border-radius: 3px; background: #cbcbcb; color: #000; }
.card svg { width: 44px; height: 44px; }
.card strong { margin: 16px 0 30px; line-height: 16px; }
.primary { border-radius: 2px; background: #009ab9; color: #fff; font-weight: 700; text-shadow: 0 -1px 0 #035; }
.card .primary { width: 100%; height: 36px; font-size: 14px; }
.details { display: flex; flex-direction: column; }
.bar { display: flex; justify-content: space-between; height: 31px; margin-top: -1px; padding: 0 11px 0 10px; border-bottom: 1px solid #777; background: #444; color: #bbb; box-sizing: content-box; }
.toggle, .bar-icons { display: flex; align-items: center; gap: 7px; }
.toggle svg { width: 10px; height: 6px; }
.bar-icons { gap: 13px; }
.bar-icons svg { width: 16px; height: 16px; }
.grade, .attempt { display: flex; justify-content: space-between; align-items: center; padding: 0 20px 0 15px; }
.grade { height: 56px; background: #444; color: #fff; }
.grade div { padding-bottom: 2px; }
.grade h3 { font-size: 13px; line-height: 15px; }
.grade p { font-size: 10px; line-height: 14px; }
.attempt { height: 62px; padding-left: 10px; background: #dff0f4; border-bottom: 1px solid #b2dcea; color: #222; }
.grade span, .attempt span { padding-top: 8px; }
.attempt div { padding-bottom: 9px; }
.attempt h3 { font-size: 12px; line-height: 16px; color: #333; }
.attempt p { font-size: 11px; line-height: 14px; color: #555; }
.submission { padding: 15px 20px 0 15px; }
h4 { font: 13px/18px "DejaVu Serif Condensed", "DejaVu Serif", "Liberation Serif", serif; color: #444; }
.file { display: flex; align-items: center; margin-top: 5px; }
.file svg { width: 14px; height: 16px; }
.file a { margin-left: 9px; font-weight: 700; color: #007a94; text-decoration: underline; }
.file button { display: grid; place-items: center; width: 22px; height: 22px; margin-left: auto; border: 1px solid #c4c4c4; border-radius: 2px; background: #fff; }
.file button svg { width: 10px; height: 12px; }
.actions { display: flex; justify-content: flex-end; gap: 17px; padding: 28px 14px 0 0; color: #000; }
.actions .primary { width: 85px; height: 31px; }
```
